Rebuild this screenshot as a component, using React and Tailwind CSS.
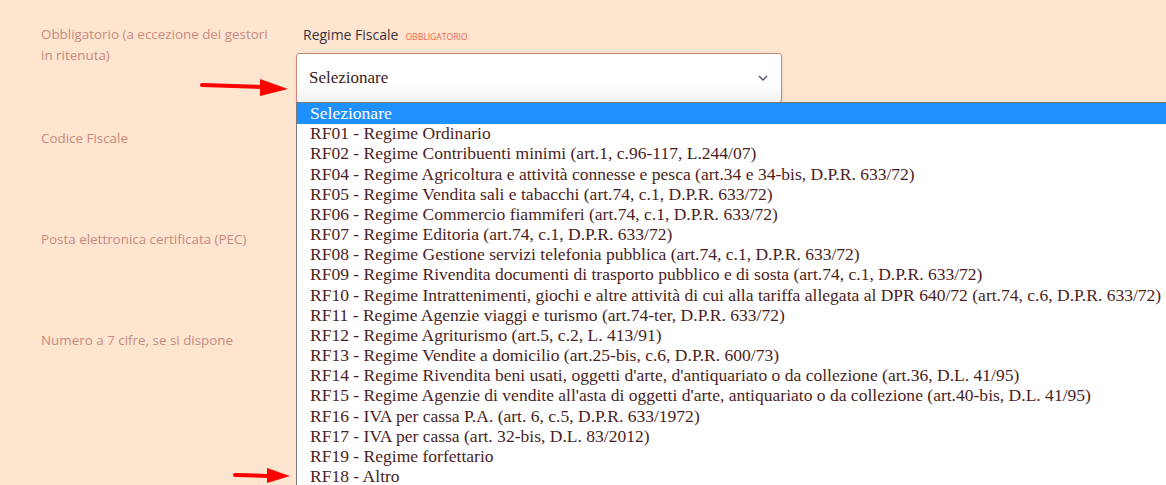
import React from 'react';

const options = [
    'RF01 - Regime Ordinario',
    'RF02 - Regime Contribuenti minimi (art.1, c.96-117, L.244/07)',
    'RF04 - Regime Agricoltura e attività connesse e pesca (art.34 e 34-bis, D.P.R. 633/72)',
    'RF05 - Regime Vendita sali e tabacchi (art.74, c.1, D.P.R. 633/72)',
    'RF06 - Regime Commercio fiammiferi (art.74, c.1, D.P.R. 633/72)',
    'RF07 - Regime Editoria (art.74, c.1, D.P.R. 633/72)',
    'RF08 - Regime Gestione servizi telefonia pubblica (art.74, c.1, D.P.R. 633/72)',
    'RF09 - Regime Rivendita documenti di trasporto pubblico e di sosta (art.74, c.1, D.P.R. 633/72)',
    'RF10 - Regime Intrattenimenti, giochi e altre attività di cui alla tariffa allegata al DPR 640/72 (art.74, c.6, D.P.R. 633/72)',
    'RF11 - Regime Agenzie viaggi e turismo (art.74-ter, D.P.R. 633/72)',
    'RF12 - Regime Agriturismo (art.5, c.2, L. 413/91)',
    'RF13 - Regime Vendite a domicilio (art.25-bis, c.6, D.P.R. 600/73)',
    "RF14 - Regime Rivendita beni usati, oggetti d'arte, d'antiquariato o da collezione (art.36, D.L. 41/95)",
    "RF15 - Regime Agenzie di vendite all'asta di oggetti d'arte, antiquariato o da collezione (art.40-bis, D.L. 41/95)",
    'RF16 - IVA per cassa P.A. (art. 6, c.5, D.P.R. 633/1972)',
    'RF17 - IVA per cassa (art. 32-bis, D.L. 83/2012)',
    'RF19 - Regime forfettario',
    'RF18 - Altro',
];

const leftLabels = [
    'Codice Fiscale',
    'Posta elettronica certificata (PEC)',
    'Numero a 7 cifre, se si dispone',
];

const App = () => {
    return (
        <div className="relative w-[1166px] h-[485px] overflow-hidden bg-[#fde5cf] font-['Open_Sans',sans-serif]">
            <div className="flex pt-[24px]">
                {/* left descriptions */}
                <div className="w-[296px] pl-[41px] pr-4 flex flex-col">
                    <p className="h-[104px] text-[13.4px] leading-[21px] text-[#c98a80]">
                        Obbligatorio (a eccezione dei gestori in ritenuta)
                    </p>
                    {leftLabels.map((t) => (
                        <p key={t} className="h-[101px] text-[13.4px] leading-[21px] text-[#c98a80]">{t}</p>
                    ))}
                </div>

                {/* field */}
                <div className="w-[486px] flex flex-col">
                    <div className="flex items-baseline gap-[7px] pl-[7px] h-[29px]">
                        <span className="text-[14px] leading-[21px] text-[#3b3340]">Regime Fiscale</span>
                        <span className="text-[8.6px] text-[#f0684a]">OBBLIGATORIO</span>
                    </div>
                    <div className="h-[50px] bg-gradient-to-b from-white from-60% to-[#f1f1f1] border border-[#c8867f] rounded-[3px] flex items-center justify-between pl-[12px] pr-[12px] shadow-[0_2px_3px_rgba(0,0,0,0.12)]">
                        <span className="font-['Liberation_Serif',serif] text-[17px] text-[#3a2222]">Selezionare</span>
                        <svg width="10" height="6" viewBox="0 0 10 6" className="mr-[1px]">
                            <path d="M1 1 L5 5 L9 1" stroke="#554466" strokeWidth="1.3" fill="none" />
                        </svg>
                    </div>
                </div>
            </div>

            <svg className="absolute left-[200px] top-[78px] w-[90px] h-[20px]" viewBox="0 0 90 20" fill="none">
                <path d="M2 7 L62 9" stroke="#ff0000" strokeWidth="4" strokeLinecap="round" />
                <polygon points="60,1 88,11 60,18" fill="#ff0000" />
            </svg>
            <svg className="absolute left-[232px] top-[466px] w-[60px] h-[18px]" viewBox="0 0 60 18" fill="none">
                <path d="M3 9 L37 10" stroke="#ff0000" strokeWidth="4" strokeLinecap="round" />
                <polygon points="35,2 58,10 35,17" fill="#ff0000" />
            </svg>

            {/* open dropdown list */}
            <div className="absolute left-[296px] top-[102px] w-[880px] bg-white border-l border-t border-[#7a7a7a] font-['Liberation_Serif',serif] text-[17.55px] leading-[20.17px] text-[#4a1e1e]">
                <div className="bg-[#1e90ff] text-white pl-[13px] -mb-px pb-px">Selezionare</div>
                {options.map((o) => (
                    <div key={o} className="pl-[13px] whitespace-nowrap -mt-px pb-px">{o}</div>
                ))}
            </div>
        </div>
    );
};

export default App;
